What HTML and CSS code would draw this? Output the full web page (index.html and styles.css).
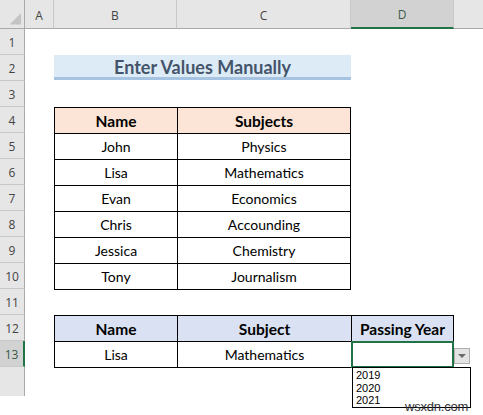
FILE: index.html
```html
<!DOCTYPE html>
<html>
<head>
<meta charset="utf-8">
<link rel="stylesheet" href="styles.css">
</head>
<body>
<div class="sheet">
  <div class="ch corner"><svg width="25" height="29" viewBox="0 0 25 29"><polygon points="22,13 22,25 10,25" fill="#c4c4c4"/></svg></div>
  <div class="ch">A</div>
  <div class="ch">B</div>
  <div class="ch">C</div>
  <div class="ch sel">D</div>
  <div class="ch last"></div>

  <div class="rh r1">1</div>
  <div class="rh r2">2</div>
  <div class="rh r3">3</div>
  <div class="rh r4">4</div>
  <div class="rh r5">5</div>
  <div class="rh r6">6</div>
  <div class="rh r7">7</div>
  <div class="rh r8">8</div>
  <div class="rh r9">9</div>
  <div class="rh r10">10</div>
  <div class="rh r11">11</div>
  <div class="rh r12">12</div>
  <div class="rh r13 sel">13</div>
  <div class="rh rest"></div>

  <div class="title">Enter Values Manually</div>

  <table class="tbl t1">
    <tr class="hd"><th class="cb">Name</th><th>Subjects</th></tr>
    <tr><td>John</td><td>Physics</td></tr>
    <tr><td>Lisa</td><td>Mathematics</td></tr>
    <tr><td>Evan</td><td>Economics</td></tr>
    <tr><td>Chris</td><td>Accounding</td></tr>
    <tr><td>Jessica</td><td>Chemistry</td></tr>
    <tr><td>Tony</td><td>Journalism</td></tr>
  </table>

  <table class="tbl t2">
    <tr class="hd"><th class="cb">Name</th><th class="cc">Subject</th><th>Passing Year</th></tr>
    <tr><td>Lisa</td><td>Mathematics</td><td class="active">
      <div class="selbox"></div>
      <div class="ddbtn"><svg width="8" height="5" viewBox="0 0 8 5"><polygon points="0,0 8,0 4,4" fill="#6b6b6b"/></svg></div>
      <div class="ddlist"><div>2019</div><div>2020</div><div>2021</div></div>
    </td></tr>
  </table>
</div>
<div class="wm">wsxdn.com</div>
</body>
</html>
```
FILE: styles.css
```css
html, body {
  margin: 0;
  padding: 0;
  width: 483px;
  height: 415px;
  overflow: hidden;
  background: #fff;
}
body { position: relative; }

.sheet {
  display: grid;
  grid-template-columns: 25px 29px 123px 174px 103px 29px;
  grid-template-rows: 29px repeat(13, 26px) 29px;
  font-family: "Lato", "Liberation Sans", sans-serif;
}

.ch {
  box-sizing: border-box;
  background: #e6e6e6;
  border-right: 1px solid #c8c8c8;
  border-bottom: 1px solid #a9a9a9;
  font-family: "Open Sans", "Liberation Sans", sans-serif;
  font-size: 12px;
  color: #444;
  display: flex;
  align-items: center;
  justify-content: center;
  padding-top: 2px;
}
.ch.corner { border-right: 1px solid #a9a9a9; padding: 0; }
.ch.corner svg { display: block; }
.ch.last { border-right: none; }
.ch.sel {
  background: #d2d2d2;
  border-bottom: 2px solid #217346;
  color: #3a5a48;
}

.rh {
  grid-column: 1;
  box-sizing: border-box;
  background: #e6e6e6;
  border-right: 1px solid #a9a9a9;
  border-bottom: 1px solid #c8c8c8;
  font-family: "Open Sans", "Liberation Sans", sans-serif;
  font-size: 12px;
  color: #444;
  display: flex;
  align-items: center;
  justify-content: center;
  padding-top: 1px;
}
.rh.sel {
  background: #d2d2d2;
  border-right: 2px solid #217346;
  color: #3a5a48;
}
.rh.rest { border-bottom: none; }

.title {
  grid-row: 3;
  grid-column: 3 / 5;
  background: #ddebf7;
  border-bottom: 3px solid #a6c4e2;
  box-sizing: border-box;
  margin-bottom: 1px;
  display: flex;
  align-items: center;
  justify-content: center;
  font-weight: bold;
  font-size: 18px;
  color: #44546a;
  padding-top: 1px;
}

.tbl {
  border-collapse: collapse;
  width: 100%;
  table-layout: fixed;
  font-size: 14px;
  color: #000;
  align-self: start;
}
.tbl th, .tbl td {
  border: 1px solid #000;
  height: 26px;
  padding: 0;
  text-align: center;
  vertical-align: middle;
  box-sizing: border-box;
}
.tbl th { font-weight: bold; font-size: 15.5px; }
.t1 { grid-row: 5 / 12; grid-column: 3 / 5; }
.t1 .hd th { background: #fce4d6; }
.t1 th.cb { width: 123px; }
.t2 { grid-row: 13 / 15; grid-column: 3 / 6; }
.t2 .hd th { background: #d9e1f2; }
.t2 th.cb { width: 123px; }
.t2 th.cc { width: 174px; }

.active { position: relative; }
.selbox {
  position: absolute;
  left: -1px; top: -1px; right: -1px; bottom: -1px;
  border: 2px solid #217346;
}
.ddbtn {
  position: absolute;
  left: 102px;
  top: 6px;
  width: 16px;
  height: 16px;
  box-sizing: border-box;
  background: #e3e3e3;
  border: 1px solid #b0b0b0;
  display: flex;
  align-items: center;
  justify-content: center;
}
.ddbtn svg { display: block; margin-top: 1px; }
.ddlist {
  position: absolute;
  left: 0;
  top: 25px;
  width: 119px;
  height: 41px;
  box-sizing: border-box;
  background: #fff;
  border: 1px solid #000;
  text-align: left;
  font-family: "Liberation Sans", sans-serif;
  font-size: 11px;
  line-height: 12.5px;
  padding: 1px 0 0 3px;
  color: #000;
  z-index: 2;
}

.wm {
  position: absolute;
  left: 405px;
  top: 399px;
  font-family: "Liberation Sans", sans-serif;
  font-size: 13px;
  color: #333;
  letter-spacing: -0.2px;
  z-index: 3;
}
```
